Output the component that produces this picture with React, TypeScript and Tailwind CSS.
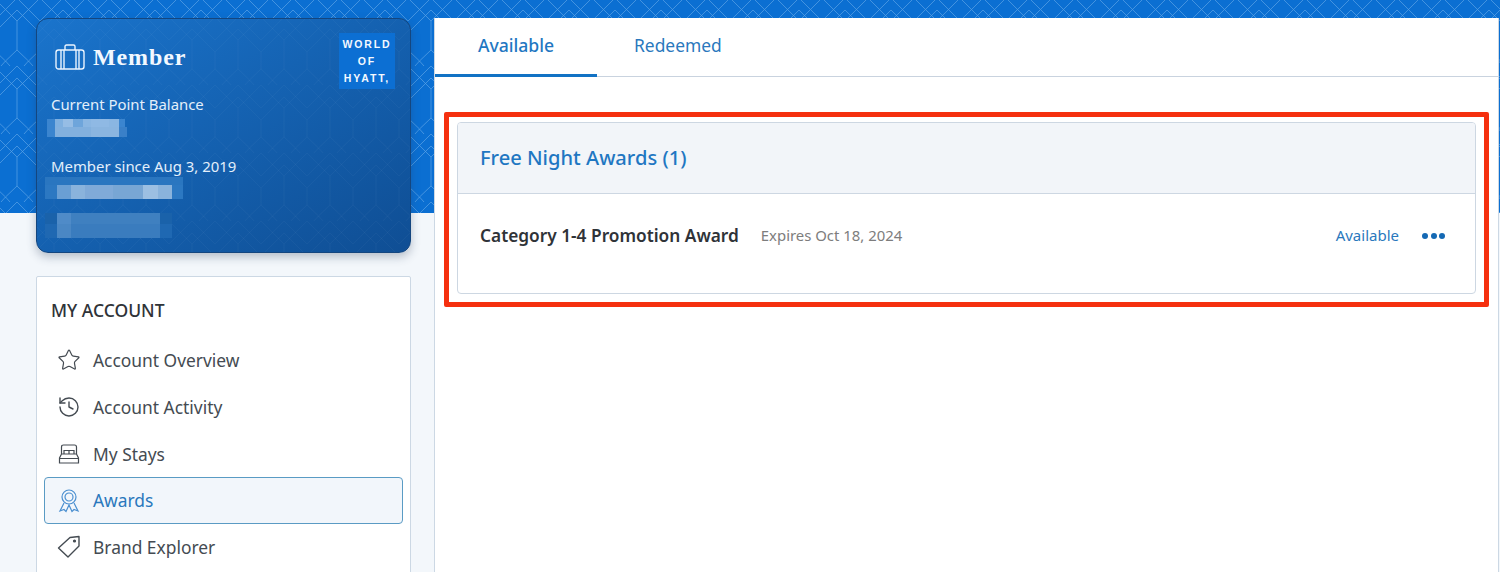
import React from "react";
import { Star, History } from "lucide-react";

const sans = { fontFamily: '"Noto Sans", sans-serif' };

/* ---------- Drawings ---------- */

const LatticeBg = ({ id, color, opacity }: { id: string; color: string; opacity: number }) => (
  <svg className="absolute inset-0 w-full h-full" aria-hidden="true">
    <defs>
      <pattern id={id} x="-6" y="-2" width="46" height="68" patternUnits="userSpaceOnUse">
        <g fill="none" stroke={color} strokeOpacity={opacity} strokeWidth="1">
          <path d="M0 23 L23 0 L46 23" />
          <path d="M0 35 L23 12 L46 35" />
          <path d="M11.5 11.5 L23 23 L34.5 11.5" />
          <path d="M23 23 V52 M0 35 V52 M46 35 V52" />
          <path d="M0 52 L11.5 63 L23 52 L34.5 63 L46 52" />
          <path d="M0 0 L11.5 11.5 M46 0 L34.5 11.5 M11.5 63 L16 68 M34.5 63 L30 68 M11.5 63 L7 68 M34.5 63 L39 68" />
        </g>
      </pattern>
    </defs>
    <rect width="100%" height="100%" fill={`url(#${id})`} />
  </svg>
);

const Suitcase = () => (
  <svg width="30" height="26" viewBox="0 0 30 26" fill="none" stroke="#eaf4ff" strokeWidth="1.4">
    <rect x="1" y="6" width="28" height="19" rx="2.5" />
    <path d="M6 6 V25 M9 6 V25 M21 6 V25 M24 6 V25" />
    <path d="M10 6 V2.5 Q10 1 11.5 1 H18.5 Q20 1 20 2.5 V6" />
  </svg>
);

const Bed = () => (
  <svg width="22" height="22" viewBox="0 0 22 22" fill="none" stroke="#444b52" strokeWidth="1.2">
    <path d="M3.5 11 V4 Q3.5 2 5.5 2 H16.5 Q18.5 2 18.5 4 V11" />
    <path d="M6 11 V7.5 H16 V11 M11 7.5 V11" />
    <path d="M3.5 11 H18.5 L20.5 15 V20 H1.5 V15 Z M1.5 15.5 H20.5" />
  </svg>
);

const Ribbon = () => (
  <svg width="22" height="24" viewBox="0 0 22 24" fill="none" stroke="#4a8fd0" strokeWidth="1.2">
    <circle cx="11" cy="8" r="7" />
    <circle cx="11" cy="8" r="4" />
    <path d="M6 14 L2 22 L6 20.5 L8 22.5 L11 16 L14 22.5 L16 20.5 L20 22 L16 14" />
  </svg>
);

const TagIcon = () => (
  <svg width="24" height="24" viewBox="0 0 24 24" fill="none" stroke="#444b52" strokeWidth="1.4" strokeLinejoin="round">
    <path d="M1.5 13 L13 2.5 L22 1.5 L22 11 L11 22 Z" />
    <circle cx="17.5" cy="6" r="0.9" fill="#444b52" />
  </svg>
);

/* ---------- Pixelated (redacted) rows ---------- */

const PixelRow = ({ cells, h }: { cells: [number, string][]; h: string }) => (
  <div className={`flex ${h}`}>
    {cells.map(([w, c], i) => (
      <div key={i} style={{ width: w, backgroundColor: c }} />
    ))}
  </div>
);

/* ---------- Member card ---------- */

const MemberCard = () => (
  <div className="relative w-[375px] h-[235px] shrink-0 rounded-[12px] overflow-hidden border border-[#14467f] bg-gradient-to-br from-[#1a74cc] to-[#0f4e94] shadow-[0_4px_10px_rgba(40,60,90,0.3)]" style={sans}>
    <LatticeBg id="card-lattice" color="#ffffff" opacity={0.03} />
    <div className="relative flex justify-between pl-[18px] pr-[15px] pt-[14px]">
      <div className="flex items-center gap-[8px] h-[48px]">
        <Suitcase />
        <span className="text-[24px] font-bold text-[#f2f8ff] tracking-[0.9px]" style={{ fontFamily: '"Liberation Serif", serif' }}>Member</span>
      </div>
      <div className="w-[56px] h-[56px] bg-[#0c6fd3] flex flex-col items-center justify-center text-[#f4f9ff] text-[10.5px] font-bold leading-[17px] tracking-[1.9px]" style={{ fontFamily: '"Liberation Sans", sans-serif' }}>
        <span>WORLD</span>
        <span>OF</span>
        <span>HYATT,</span>
      </div>
    </div>
    <div className="relative mt-[5px] px-[14px] text-[14.9px] leading-[20px] text-[#e3effb]">
      <div>Current Point Balance</div>
      <div className="mt-[5px] -ml-[4px]">
        <PixelRow h="h-[8px]" cells={[[8, "#3b85cf"], [8, "#7fb0e0"], [10, "#96bde5"], [10, "#6ea5db"], [8, "#8ab6e2"], [18, "#8fb9e4"], [10, "#8ab6e2"], [6, "#3b85cf"]]} />
        <PixelRow h="h-[10px]" cells={[[8, "#3b85cf"], [36, "#82b0de"], [28, "#8ab5e0"], [8, "#3a80c8"]]} />
      </div>
      <div className="mt-[19px]">Member since Aug 3, 2019</div>
      <div className="mt-[1px] -ml-[6px]">
        <PixelRow h="h-[8px]" cells={[[138, "#2a76c0"]]} />
        <PixelRow h="h-[14px]" cells={[[12, "#2c78c2"], [14, "#6a9fd4"], [14, "#8ab3dc"], [14, "#80aad8"], [14, "#80aad8"], [15, "#78a6d4"], [15, "#78a6d4"], [15, "#9cbfe2"], [14, "#8ab3dc"], [11, "#2c78c2"]]} />
      </div>
      <div className="mt-[14px] -ml-[6px]">
        <PixelRow h="h-[11px]" cells={[[12, "#1a62aa"], [14, "#4f8bc8"], [89, "#3f80c0"], [12, "#1a62aa"]]} />
        <PixelRow h="h-[14px]" cells={[[12, "#1f68b2"], [14, "#4a87c4"], [89, "#3a7cbe"], [12, "#1f68b2"]]} />
      </div>
    </div>
  </div>
);

/* ---------- Sidebar ---------- */

const NavRow = ({ icon, label, active, last }: { icon: React.ReactNode; label: string; active?: boolean; last?: boolean }) => (
  <div className={`flex items-center h-[47px] rounded-[4px] border ${active ? "border-[#5a9bc4] bg-[#f2f6fb] text-[#2a78bd]" : "border-transparent text-[#444b52]"} ${last ? "-mt-px" : ""}`}>
    <span className="w-[48px] flex justify-center shrink-0">{icon}</span>
    <span className={`text-[17.4px] ${active ? "" : "pt-[2px]"}`}>{label}</span>
  </div>
);

const Sidebar = () => (
  <div className="w-[375px] h-[340px] shrink-0 bg-white border border-[#ccd8e4] rounded-t-[2px] px-[7px]" style={sans}>
    <div className="h-[59px] pl-[7px] pt-[20px] text-[17.5px] leading-[26px] font-medium text-[#2f3338]">MY ACCOUNT</div>
    <NavRow icon={<Star size={24} strokeWidth={1.2} color="#444b52" />} label="Account Overview" />
    <NavRow icon={<History size={24} strokeWidth={1.4} color="#444b52" />} label="Account Activity" />
    <NavRow icon={<Bed />} label="My Stays" />
    <NavRow icon={<Ribbon />} label="Awards" active />
    <NavRow icon={<TagIcon />} label="Brand Explorer" last />
  </div>
);

/* ---------- Right panel ---------- */

const Tabs = () => (
  <div className="flex h-[59px] border-b border-[#c9d3df] shrink-0">
    <div className="w-[162px] h-[59px] flex items-center justify-center border-b-[3px] border-[#1272c4] text-[17.6px] font-medium text-[#1f77c2] pb-[1px]">
      Available
    </div>
    <div className="ml-[37px] flex items-center text-[17.4px] text-[#2a78bd] pb-[3px]">Redeemed</div>
  </div>
);

const AwardsCard = () => (
  <div className="ml-[9px] mr-[9px] mt-[35px] border-[5px] border-[#f5300f] rounded-[2px] p-[5px] pl-[8px] pr-[8px] pb-[8px]">
    <div className="border border-[#cdd7e2] rounded-[4px] overflow-hidden h-[172px]">
      <div className="h-[71px] bg-[#f2f5f9] border-b border-[#cdd7e2] flex items-center pl-[22px]">
        <span className="text-[20.1px] font-medium text-[#1f77c2]">Free Night Awards (1)</span>
      </div>
      <div className="h-[84px] flex items-center pl-[22px] pr-[30px]">
        <span className="text-[17.3px] font-semibold text-[#2f3338]">Category 1-4 Promotion Award</span>
        <span className="ml-[22px] text-[14.9px] text-[#7d7d7d] pb-[2px]">Expires Oct 18, 2024</span>
        <span className="ml-auto text-[15px] text-[#2a78bd] pb-[2px]">Available</span>
        <span className="ml-[23px] flex gap-[2.5px]">
          <i className="block w-[6px] h-[6px] rounded-full bg-[#1469b4]" />
          <i className="block w-[6px] h-[6px] rounded-full bg-[#1469b4]" />
          <i className="block w-[6px] h-[6px] rounded-full bg-[#1469b4]" />
        </span>
      </div>
    </div>
  </div>
);

export default function App() {
  return (
    <div className="relative w-[1500px] h-[572px] overflow-hidden bg-[#f3f7fb]" style={sans}>
      {/* Banner */}
      <div className="absolute top-0 left-0 w-full h-[213px] bg-[#0b6fd2]">
        <LatticeBg id="banner-lattice" color="#5ba3e6" opacity={0.7} />
      </div>

      <div className="relative flex h-full pt-[18px] pl-[36px]">
        <div className="w-[375px] flex flex-col gap-[23px] shrink-0">
          <MemberCard />
          <Sidebar />
        </div>
        <div className="ml-[23px] flex-1 flex flex-col bg-white border-l border-r border-[#ccd8e4] mr-[1px]">
          <Tabs />
          <AwardsCard />
        </div>
      </div>
    </div>
  );
}
